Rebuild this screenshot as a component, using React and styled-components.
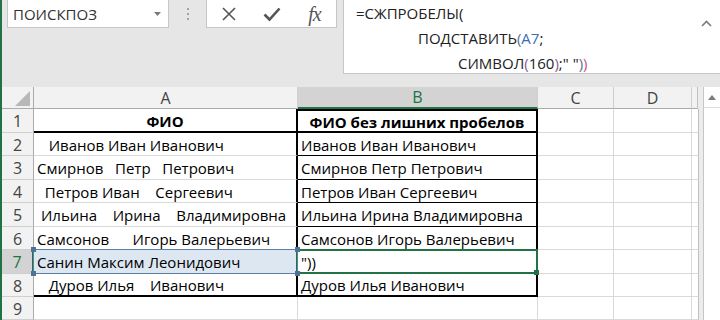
import React from "react";
import styled, { createGlobalStyle } from "styled-components";

const GREEN = "#217346";
const GRID = "#d9d9d9";
const HEAD_LINE = "#cfcfcf";
const BLACK2 = "2px solid #000";
const BLACK1 = "1px solid #000";

const GlobalStyle = createGlobalStyle`
  html, body {
    margin: 0;
    padding: 0;
    background: #fff;
  }
`;

const Window = styled.div`
  width: 720px;
  height: 320px;
  display: flex;
  overflow: hidden;
  font-family: "Open Sans", "Noto Sans", sans-serif;
  color: #000;
`;

const Edge = styled.div`
  width: 2px;
  flex-shrink: 0;
  background: ${GREEN};
`;

const Main = styled.div`
  width: 718px;
  height: 320px;
  display: flex;
  flex-direction: column;
`;

const FormulaBar = styled.div`
  height: 87px;
  flex-shrink: 0;
  background: #e6e6e6;
  display: flex;
  align-items: flex-start;
  padding-left: 5px;
`;

const NameBox = styled.div`
  width: 162px;
  height: 28px;
  box-sizing: border-box;
  background: #fff;
  border: 1px solid #c6c6c6;
  border-top: none;
  display: flex;
  align-items: center;
  justify-content: space-between;
  padding: 0 7px 0 5px;
  font-size: 15px;
  color: #333;
`;

const Grip = styled.div`
  width: 37px;
  height: 28px;
  display: flex;
  flex-direction: column;
  align-items: center;
  justify-content: center;
  gap: 3px;
`;

const Dot = styled.span`
  width: 2px;
  height: 2px;
  background: #a3a3a3;
`;

const FxButtons = styled.div`
  width: 131px;
  height: 28px;
  box-sizing: border-box;
  background: #fff;
  border: 1px solid #c6c6c6;
  border-top: none;
  display: flex;
  align-items: center;
`;

const IconSlot = styled.div`
  width: 43px;
  height: 26px;
  display: flex;
  align-items: center;
  justify-content: center;
  color: #555;
`;

const FxText = styled.span`
  font-family: "Liberation Serif", "DejaVu Serif", serif;
  font-style: italic;
  font-size: 20px;
  line-height: 20px;
  color: #555;
  letter-spacing: -1px;
`;

const FormulaBox = styled.div`
  margin-left: 6px;
  flex: 1;
  height: 74px;
  box-sizing: border-box;
  background: #fff;
  border-left: 1px solid #c6c6c6;
  border-bottom: 1px solid #c6c6c6;
  display: flex;
  padding: 1px 8px 0 12px;
`;

const FormulaLines = styled.div`
  flex: 1;
  font-size: 15px;
  line-height: 25px;
  color: #222;
`;

const FormulaLine = styled.div`
  padding-left: ${(p) => p.$indent}px;
  white-space: pre;
`;

const Tok = styled.span`
  color: ${(p) => p.$color};
`;

const Caret = styled.div`
  padding-top: 9px;
  color: #7a7a7a;
`;

const Sheet = styled.div`
  height: 233px;
  flex-shrink: 0;
  display: flex;
`;

const Grid = styled.div`
  display: grid;
  grid-template-columns: 32px 264px 240px 76px 78px 6px;
  grid-template-rows: 22px ${(p) => p.$rows};
  height: 233px;
`;

const Corner = styled.div`
  box-sizing: border-box;
  background: #f2f2f2;
  border-right: 1px solid #ababab;
  border-bottom: 1px solid #ababab;
  display: flex;
  align-items: flex-end;
  justify-content: flex-end;
  padding: 0 3px 2px 0;
`;

const ColHead = styled.div`
  box-sizing: border-box;
  display: flex;
  align-items: center;
  justify-content: center;
  font-size: 16px;
  background: ${(p) => (p.$active ? "#d3d3d3" : "#f2f2f2")};
  color: ${(p) => (p.$active ? GREEN : "#444")};
  border-right: 1px solid ${(p) => p.$line || HEAD_LINE};
  border-bottom: ${(p) => (p.$active ? `2px solid ${GREEN}` : "1px solid #ababab")};
`;

const RowHead = styled.div`
  box-sizing: border-box;
  display: flex;
  align-items: center;
  justify-content: center;
  padding-top: 1px;
  font-size: 16px;
  background: ${(p) => (p.$active ? "#d3d3d3" : "#f2f2f2")};
  color: ${(p) => (p.$active ? GREEN : "#444")};
  border-right: ${(p) => (p.$active ? `2px solid ${GREEN}` : "1px solid #ababab")};
  border-bottom: 1px solid ${HEAD_LINE};
`;

const Cell = styled.div`
  position: relative;
  box-sizing: border-box;
  display: flex;
  align-items: center;
  justify-content: ${(p) => (p.$center ? "center" : "flex-start")};
  padding: 1px 3px 0;
  font-size: 15px;
  font-weight: ${(p) => (p.$bold ? 700 : 400)};
  white-space: pre;
  background: ${(p) => p.$fill || "#fff"};
  border-top: ${(p) => p.$t || "none"};
  border-right: ${(p) => p.$r || `1px solid ${GRID}`};
  border-bottom: ${(p) => p.$b || `1px solid ${GRID}`};
`;

const RefFrame = styled.span`
  position: absolute;
  left: -1px;
  top: -1px;
  right: -2px;
  bottom: -1px;
  border: 1px solid #5b7fa6;
  pointer-events: none;
  z-index: 3;
`;

const Handle = styled.i`
  position: absolute;
  width: 5px;
  height: 5px;
  background: ${(p) => p.$color};
  ${(p) => (p.$top ? "top: -3px;" : "bottom: -3px;")}
  ${(p) => (p.$left ? "left: -3px;" : "right: -3px;")}
`;

const ActiveFrame = styled.span`
  position: absolute;
  left: -2px;
  top: -1px;
  right: -2px;
  bottom: -1px;
  border: 2px solid ${GREEN};
  pointer-events: none;
  z-index: 2;
`;

const Gutter = styled.div`
  width: 5px;
  background: #ececec;
`;

const Scrollbar = styled.div`
  width: 17px;
  box-sizing: border-box;
  background: #fff;
  border-left: 1px solid #c6c6c6;
`;

const ScrollUp = styled.div`
  height: 21px;
  box-sizing: border-box;
  border-bottom: 1px solid #dedede;
  display: flex;
  align-items: center;
  justify-content: center;
`;

const rows = [
  { a: "ФИО", b: "ФИО без лишних пробелов", head: true },
  { a: "   Иванов Иван Иванович", b: "Иванов Иван Иванович" },
  { a: "Смирнов   Петр   Петрович", b: "Смирнов Петр Петрович" },
  { a: "  Петров Иван    Сергеевич", b: "Петров Иван Сергеевич" },
  { a: " Ильина    Ирина    Владимировна", b: "Ильина Ирина Владимировна" },
  { a: "Самсонов      Игорь Валерьевич", b: "Самсонов Игорь Валерьевич" },
  { a: "Санин Максим Леонидович", b: '"))', active: true },
  { a: "   Дуров Илья    Иванович", b: "Дуров Илья Иванович" },
  { a: "", b: "" },
];

const heights = [24, 23, 24, 23, 24, 23, 24, 23, 23];

const cols = ["A", "B", "C", "D", ""];

const XIcon = () => (
  <svg width="16" height="16" viewBox="0 0 16 16">
    <path d="M2 2 L14 14 M14 2 L2 14" stroke="currentColor" strokeWidth="1.6" fill="none" />
  </svg>
);

const CheckIcon = () => (
  <svg width="18" height="16" viewBox="0 0 18 16">
    <path d="M1.5 8.5 L6.5 13.5 L16.5 2.5" stroke="currentColor" strokeWidth="2.6" fill="none" />
  </svg>
);

const DropArrow = () => (
  <svg width="7" height="4" viewBox="0 0 7 4">
    <path d="M0 0 H7 L3.5 4 Z" fill="#7a7a7a" />
  </svg>
);

const UpChevron = () => (
  <svg width="11" height="7" viewBox="0 0 11 7">
    <path d="M1 6 L5.5 1.5 L10 6" stroke="currentColor" strokeWidth="1.6" fill="none" />
  </svg>
);

const CornerMark = () => (
  <svg width="15" height="15" viewBox="0 0 15 15">
    <path d="M15 0 V15 H0 Z" fill="#b8b8b8" />
  </svg>
);

const UpTriangle = () => (
  <svg width="8" height="5" viewBox="0 0 8 5">
    <path d="M0 5 L4 0 L8 5 Z" fill="#7c7c7c" />
  </svg>
);

const App = () => {
  return (
    <Window>
      <GlobalStyle />
      <Edge />
      <Main>
        <FormulaBar>
          <NameBox>
            <span>ПОИСКПОЗ</span>
            <DropArrow />
          </NameBox>
          <Grip>
            <Dot />
            <Dot />
            <Dot />
          </Grip>
          <FxButtons>
            <IconSlot>
              <XIcon />
            </IconSlot>
            <IconSlot>
              <CheckIcon />
            </IconSlot>
            <IconSlot>
              <FxText>fx</FxText>
            </IconSlot>
          </FxButtons>
          <FormulaBox>
            <FormulaLines>
              <FormulaLine $indent={0}>=СЖПРОБЕЛЫ(</FormulaLine>
              <FormulaLine $indent={62}>
                ПОДСТАВИТЬ<Tok $color="#5f7091">(</Tok>
                <Tok $color="#3c6db3">A7</Tok>;
              </FormulaLine>
              <FormulaLine $indent={102}>
                СИМВОЛ<Tok $color="#8b5a98">(</Tok>160<Tok $color="#8b5a98">)</Tok>;" "
                <Tok $color="#5f7091">)</Tok>
                <Tok $color="#c4557f">)</Tok>
              </FormulaLine>
            </FormulaLines>
            <Caret>
              <UpChevron />
            </Caret>
          </FormulaBox>
        </FormulaBar>

        <Sheet>
          <Grid $rows={heights.map((h) => `${h}px`).join(" ")}>
            <Corner>
              <CornerMark />
            </Corner>
            {cols.map((c, i) => (
              <ColHead key={c + i} $active={c === "B"} $line={i === 4 ? "#c0c0c0" : undefined}>
                {c}
              </ColHead>
            ))}
            {rows.map((row, i) => {
              const inTable = i < 8;
              const edgeRow = i === 0 || i === 7;
              return (
                <React.Fragment key={i}>
                  <RowHead $active={row.active}>{String(i + 1)}</RowHead>
                  <Cell
                    $bold={row.head}
                    $center={row.head}
                    $fill={row.active ? "#dde7f1" : undefined}
                    $r={inTable ? BLACK2 : undefined}
                    $b={edgeRow ? BLACK2 : undefined}
                  >
                    {row.a}
                    {row.active && (
                      <RefFrame>
                        <Handle $color="#4f7396" $top $left />
                        <Handle $color="#4f7396" $top />
                        <Handle $color="#4f7396" $left />
                        <Handle $color="#4f7396" />
                      </RefFrame>
                    )}
                  </Cell>
                  <Cell
                    $bold={row.head}
                    $center={row.head}
                    $t={i === 0 ? BLACK2 : undefined}
                    $r={inTable ? BLACK2 : undefined}
                    $b={edgeRow ? BLACK2 : inTable ? BLACK1 : undefined}
                  >
                    {row.b}
                    {row.active && (
                      <ActiveFrame>
                        <Handle $color={GREEN} />
                      </ActiveFrame>
                    )}
                  </Cell>
                  <Cell />
                  <Cell />
                  <Cell $r="1px solid #c0c0c0" />
                </React.Fragment>
              );
            })}
          </Grid>
          <Gutter />
          <Scrollbar>
            <ScrollUp>
              <UpTriangle />
            </ScrollUp>
          </Scrollbar>
        </Sheet>
      </Main>
    </Window>
  );
};

export default App;
